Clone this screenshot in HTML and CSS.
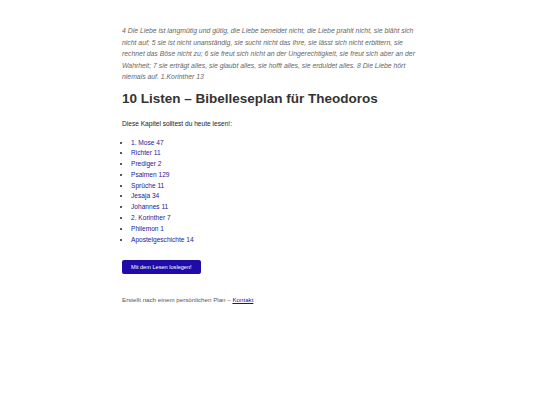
FILE: index.html
```html
<!DOCTYPE html>
<html lang="de">
<head>
<meta charset="utf-8">
<title>10 Listen – Bibelleseplan für Theodoros</title>
<link rel="stylesheet" href="styles.css">
</head>
<body>
<main class="page">
  <p class="verse">4 Die Liebe ist langmütig und gütig, die Liebe beneidet nicht, die Liebe prahlt nicht, sie bläht sich nicht auf; 5 sie ist nicht unanständig, sie sucht nicht das Ihre, sie lässt sich nicht erbittern, sie rechnet das Böse nicht zu; 6 sie freut sich nicht an der Ungerechtigkeit, sie freut sich aber an der Wahrheit; 7 sie erträgt alles, sie glaubt alles, sie hofft alles, sie erduldet alles. 8 Die Liebe hört niemals auf. 1.Korinther 13</p>
  <h1 class="title">10 Listen – Bibelleseplan für Theodoros</h1>
  <p class="intro">Diese Kapitel solltest du heute lesen!:</p>
  <ul class="chapters">
    <li><a href="#">1. Mose 47</a></li>
    <li><a href="#">Richter 11</a></li>
    <li><a href="#">Prediger 2</a></li>
    <li><a href="#">Psalmen 129</a></li>
    <li><a href="#">Sprüche 11</a></li>
    <li><a href="#">Jesaja 34</a></li>
    <li><a href="#">Johannes 11</a></li>
    <li><a href="#">2. Korinther 7</a></li>
    <li><a href="#">Philemon 1</a></li>
    <li><a href="#">Apostelgeschichte 14</a></li>
  </ul>
  <button class="start">Mit dem Lesen loslegen!</button>
  <p class="footer">Erstellt nach einem persönlichen Plan – <a href="#">Kontakt</a></p>
</main>
</body>
</html>
```
FILE: styles.css
```css
html, body {
  margin: 0;
  padding: 0;
  background: #ffffff;
}
body {
  font-family: "Liberation Sans", Arial, sans-serif;
  color: #222;
}
.page {
  width: 298px;
  margin: 0 auto 0 122px;
  padding-top: 25px;
}
.verse {
  margin: 0;
  font-size: 6.85px;
  line-height: 11.5px;
  font-style: italic;
  color: #666;
}
.title {
  margin: 6px 0 0;
  font-size: 13.5px;
  line-height: 20px;
  font-weight: bold;
  color: #333;
}
.intro {
  margin: 10px 0 0;
  font-size: 6.6px;
  line-height: 10px;
  color: #222;
}
.chapters {
  margin: 9px 0 0;
  padding-left: 9px;
  font-size: 6.6px;
  line-height: 10.8px;
}
.chapters a {
  color: #1a1a9c;
  text-decoration: none;
}
.start {
  display: block;
  margin: 15px 0 0;
  padding: 0 9px;
  height: 14px;
  border: none;
  border-radius: 2px;
  background: #1f0ca8;
  color: #fff;
  font-family: "Liberation Sans", Arial, sans-serif;
  font-size: 5.6px;
}
.footer {
  margin: 21px 0 0;
  font-size: 6.2px;
  line-height: 10px;
  color: #555;
}
.footer a {
  color: #1a0dab;
}
```
